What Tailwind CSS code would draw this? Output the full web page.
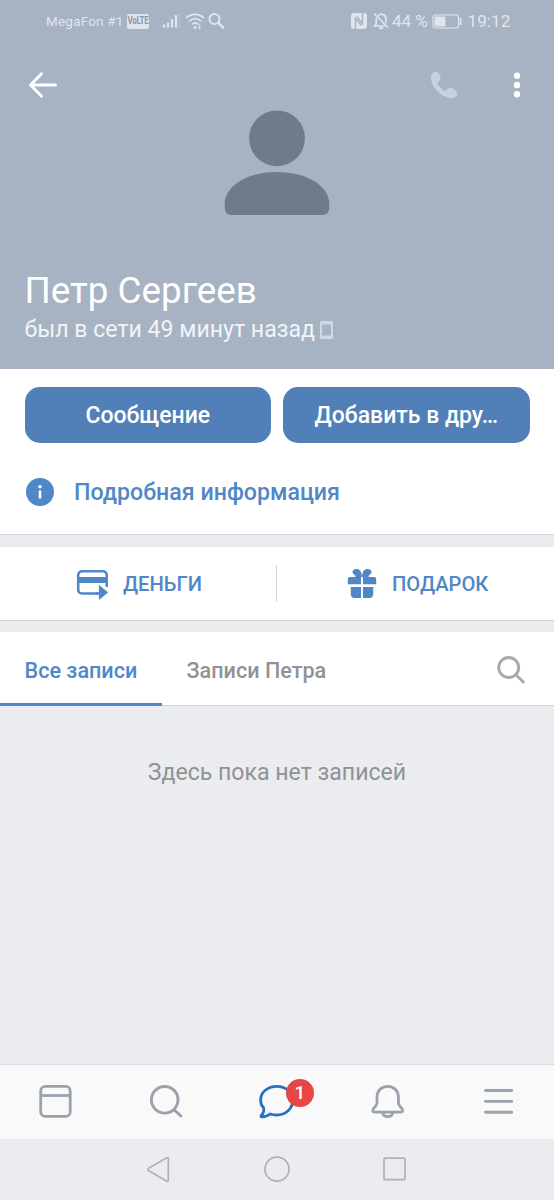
<!DOCTYPE html>
<html lang="ru">
<head>
<meta charset="utf-8">
<title>Петр Сергеев</title>
<script src="https://cdn.jsdelivr.net/npm/@tailwindcss/browser@4"></script>
</head>
<body class="flex h-[1200px] w-[554px] flex-col overflow-hidden bg-[#ebecf0] font-['Roboto','Noto_Sans',sans-serif]">

<header class="flex h-[369px] shrink-0 flex-col bg-[#a7b2c3] text-white">
  <!-- Status bar -->
  <div class="flex h-[42px] items-center pl-[46px] text-[#e0e5ed]">
    <span class="w-[81px] text-[13.5px] leading-[42px] tracking-[0.2px] whitespace-nowrap">MegaFon #1</span>
    <span class="flex h-[15px] w-[22px] items-center justify-center rounded-[2px] bg-[#dfe4ec] text-[8px] font-bold tracking-[-0.3px] text-[#8c98ab]"><span class="scale-y-125">VoLTE</span></span>
    <svg class="ml-[13px] h-[18px] w-[18px]" viewBox="0 0 18 18" fill="none" stroke="currentColor" stroke-width="2.300"><path d="M2 15.500v-3M6 15.500v-5M10 15.500V7M14 15.500V3"/><path d="M17.5 16V1" stroke-width="1" opacity=".3"/></svg>
    <svg class="ml-[5px] h-[18px] w-[20px]" viewBox="0 0 20 18" fill="none" stroke="currentColor" stroke-width="1.8"><path d="M1 6.2C6 1 14 1 19 6.2M4 9.4c3.500-3.600 8.500-3.600 12 0M7 12.400c2-1.800 4-1.800 6 0"/><path d="M10 13.400l1.800 2-1.800 2-1.800-2zM13 14.500l1.500-2.500 1.500 2.500zM13 15.200h3l-1.500 2.500z" fill="currentColor" stroke="none"/></svg>
    <svg class="ml-[3px] h-[18px] w-[18px]" viewBox="0 0 18 18" fill="none" stroke="currentColor" stroke-width="2.200" stroke-linecap="round"><circle cx="6.500" cy="7" r="5"/><path d="M10.500 11l4.700 4.700" stroke-width="2.500"/></svg>
    <svg class="ml-[125px] h-[16px] w-[17px]" viewBox="0 0 17 16"><rect width="16" height="16" rx="3" fill="currentColor"/><path d="M4.500 16V5.500l6 7M11.500 0v10.500l-6-7" stroke="#a7b2c3" stroke-width="1.400" fill="none"/></svg>
    <svg class="ml-[5px] h-[18px] w-[16px]" viewBox="0 0 16 18" fill="none" stroke="currentColor" stroke-width="1.700"><path d="M1 1.500l14 14M5 3.500C9 .5 13 3 13 7v4M3.200 6v6L1.500 14H12"/><path d="M6 16.200h4" stroke-width="2"/></svg>
    <span class="ml-[3px] w-[40px] text-[17px] leading-[42px] whitespace-nowrap">44 %</span>
    <svg class="h-[15px] w-[31px]" viewBox="0 0 31 15" fill="none" stroke="currentColor"><rect x="1" y="1" width="25.500" height="13" rx="2.500" stroke-width="1.100"/><path d="M3 3h10v9H3z" fill="currentColor"/><path d="M28.500 4v7" stroke-width="1.700"/></svg>
    <span class="ml-[4.500px] text-[17.200px] leading-[42px]">19:12</span>
  </div>

  <!-- Toolbar -->
  <nav class="mt-[17px] flex h-[51px] items-center pl-[28px]">
    <svg class="h-[28px] w-[30px]" viewBox="0 0 30 28" fill="none" stroke="#fff" stroke-width="3" stroke-linecap="round" stroke-linejoin="round"><path d="M27.500 14H2.500M13.500 2.800L2.500 14l11 11.200"/></svg>
    <svg class="ml-[372px] h-[28px] w-[28px]" viewBox="0 0 28 28" fill="#c9d1dc"><path d="M1 6C1 2.500 3 1 5.500 1 8.500 1 10.500 3.500 10.500 7c0 2.400-1.500 3.500-2.500 4.500-.7.800-.4 1.700.2 2.500 1.500 2.200 3.300 4 5.300 5.400.9.600 1.700.7 2.500-.1 1.300-1.300 2.400-2.300 4.500-2.300 3.300 0 6.500 2.500 6.500 5.500 0 3-2.500 4.500-6 4.500C13 27 1 17.500 1 6z"/></svg>
    <svg class="ml-[55px] h-[28px] w-[8px]" viewBox="0 0 8 28" fill="#fff"><circle cx="4" cy="4.700" r="3.200"/><circle cx="4" cy="14" r="3.200"/><circle cx="4" cy="23.300" r="3.200"/></svg>
  </nav>

  <svg class="ml-[224px] h-[106px] w-[106px]" viewBox="0 0 106 106" fill="#6f7b8b"><circle cx="53" cy="28.300" r="27.900"/><path d="M53 62c30 0 52.300 14 52.300 32v3c0 5-2.300 8-7 8H7.700c-4.700 0-7-3-7-8v-3C.7 76 23 62 53 62z"/></svg>

  <h1 class="mt-[53px] ml-[24.500px] h-[43px] text-[36.800px] leading-[43px] font-normal whitespace-nowrap">Петр Сергеев</h1>
  <div class="mt-[4px] ml-[24.500px] flex h-[28px] items-center text-[#f1f4f8]">
    <span class="w-[295.500px] text-[23.100px] leading-[28px] whitespace-nowrap">был в сети 49 минут назад</span>
    <svg class="h-[19px] w-[13px]" viewBox="0 0 13 19"><path fill-rule="evenodd" fill="#d1d8e2" d="M1.500 0h10a1.500 1.500 0 0 1 1.500 1.500v15a1.500 1.500 0 0 1-1.500 1.500h-10A1.500 1.500 0 0 1 0 16.500v-15A1.500 1.500 0 0 1 1.500 0zM2 3.500v11h9v-11z"/></svg>
  </div>
</header>

<section class="h-[166px] shrink-0 border-b border-[#d3d5d9] bg-white px-[24.500px] pt-[18px]">
  <div class="flex gap-[12px]">
    <button class="h-[56px] w-[246.500px] rounded-[15px] bg-[#5180b8] pt-[2px] text-[23px] font-medium text-white">Сообщение</button>
    <button class="h-[56px] w-[246.500px] rounded-[15px] bg-[#5180b8] pt-[2px] text-[23px] font-medium text-white">Добавить в дру…</button>
  </div>
  <div class="mt-[35px] flex h-[28px] items-center pl-[1.500px] text-[#4f87c7]">
    <svg class="h-[28px] w-[28px]" viewBox="0 0 28 28"><circle cx="14" cy="14" r="14" fill="currentColor"/><circle cx="14" cy="8.700" r="1.800" fill="#fff"/><path d="M14 12.500v8" stroke="#fff" stroke-width="2.600"/></svg>
    <span class="ml-[20px] text-[23.200px] leading-[28px] font-medium whitespace-nowrap">Подробная информация</span>
  </div>
</section>

<section class="mt-[12px] flex h-[74px] shrink-0 items-center border-b border-[#cfd1d6] bg-white text-[20px] font-medium text-[#4f87c7]">
  <div class="flex w-[276px] items-center pl-[76px]">
    <svg class="h-[32px] w-[32px]" viewBox="0 0 32 32"><path d="M22 25.500H6a3.800 3.800 0 0 1-3.800-3.800V7A3.800 3.800 0 0 1 6 3.200h21A3.800 3.800 0 0 1 30.800 7v12" fill="none" stroke="currentColor" stroke-width="2.600"/><path d="M2 9h29v6H2z" fill="currentColor"/><path d="M22.500 18.200c0-1 .8-1.400 1.600-.8l7.500 6.200c.6.500.6 1.200 0 1.700l-7.500 6.200c-.8.600-1.600.2-1.600-.8z" fill="currentColor" stroke="#fff" stroke-width=".8"/><path d="M20 24.200h5v2.600h-5z" fill="currentColor"/></svg>
    <span class="ml-[15px] text-[20.200px] leading-[28px] whitespace-nowrap">ДЕНЬГИ</span>
  </div>
  <div class="h-[37px] w-px bg-[#d0d2d6]"></div>
  <div class="flex items-center pl-[70px]">
    <svg class="h-[31px] w-[30px]" viewBox="0 0 30 31" fill="currentColor"><path d="M14 9H4C.5 9 .8 10.500.8 12v4.200H14zM16 9h10c3.500 0 3.200 1.500 3.200 3v4.200H16zM3.800 19H14v11H8.500c-3.500 0-4.700-1.300-4.700-4.500zM26.200 19H16v11h5.500c3.500 0 4.700-1.300 4.700-4.500z"/><path d="M15 8.500C14.500 3 12.500 1 9.700 1 7 1 5.500 2.300 5.500 4c0 1.500 1.500 2.200 3 4l-.5 2h5.500zM15 8.500C15.500 3 17.500 1 20.300 1c2.700 0 4.200 1.300 4.200 3 0 1.500-1.500 2.200-3 4l.5 2h-5.500z"/></svg>
    <span class="ml-[15px] text-[20.200px] leading-[28px] whitespace-nowrap">ПОДАРОК</span>
  </div>
</section>

<section class="mt-[11px] flex h-[74px] shrink-0 border-b border-[#cfd1d6] bg-white text-[21.600px] font-medium">
  <div class="-mb-px h-[74px] w-[162px] border-b-[3px] border-[#4f87c7] pl-[24.500px] leading-[78px] whitespace-nowrap text-[#4f87c7]">Все записи</div>
  <div class="w-[334px] pl-[24.500px] leading-[78px] whitespace-nowrap text-[#909295]">Записи Петра</div>
  <svg class="mt-[23px] h-[30px] w-[30px]" viewBox="0 0 30 30" fill="none" stroke="#a6a9ad" stroke-width="2.900" stroke-linecap="round"><circle cx="12.700" cy="12.500" r="10"/><path d="M20.300 20.200l7 6.800"/></svg>
</section>

<p class="mt-[53px] text-center text-[23.100px] leading-[28px] whitespace-nowrap text-[#909295]">Здесь пока нет записей</p>

<footer class="mt-auto shrink-0">
  <nav class="flex h-[75px] border-t border-[#dcdde1] bg-[#f9f9fa] text-[#99a2ad]">
    <svg class="mt-[18px] ml-[38px] h-[36px] w-[36px]" viewBox="0 0 36 36" fill="none" stroke="currentColor" stroke-width="2.800"><rect x="2.700" y="3.400" width="29.500" height="30" rx="4.500"/><path d="M3 12.500h29"/></svg>
    <svg class="mt-[18px] ml-[75px] h-[36px] w-[36px]" viewBox="0 0 36 36" fill="none" stroke="currentColor" stroke-width="2.900" stroke-linecap="round"><circle cx="15.700" cy="16.800" r="13.300"/><path d="M25.500 27l6.300 6"/></svg>
    <div class="relative mt-[18px] ml-[72px] h-[36px] w-[40px]">
      <svg class="h-[36px] w-[40px]" viewBox="0 0 40 36" fill="none" stroke="#2a70c0" stroke-width="2.800" stroke-linejoin="round"><path d="M19.700 3.300C10.700 3.300 3.600 9.300 3.600 17c0 3.300 1.100 5.800 3 7.700.7 3-.2 5.700-2.400 7.900-.5.600-.2 1.200.5 1.200 3.500.1 6-.7 8.500-2.800 2 .7 4 1 6.500 1 9 0 16.100-6.500 16.100-14.700 0-8-7.100-14-16.100-14z"/></svg>
      <span class="absolute -top-[4px] left-[29px] flex h-[28px] w-[28px] items-center justify-center rounded-full bg-[#e64646] pt-[1px] text-[19px] font-medium text-white">1</span>
    </div>
    <svg class="mt-[18px] ml-[73px] h-[36px] w-[36px]" viewBox="0 0 36 36" fill="none" stroke="currentColor" stroke-width="2.800" stroke-linejoin="round"><path d="M17.700 3.400c-6.600 0-10.700 4.800-10.700 11v5.300c0 1.800-.6 2.600-2 4.100-1.800 1.900-2.300 2.700-2.300 3.500 0 1.200.9 1.900 2.400 1.900h25.200c1.500 0 2.400-.7 2.400-1.900 0-.8-.5-1.600-2.300-3.500-1.400-1.500-2-2.300-2-4.100v-5.300c0-6.200-4.100-11-10.700-11z"/><path d="M12.500 29.500c.5 2.700 2.600 4.200 5.200 4.200s4.700-1.500 5.200-4.200"/></svg>
    <svg class="mt-[18px] ml-[75px] h-[36px] w-[36px]" viewBox="0 0 36 36" fill="none" stroke="currentColor" stroke-width="2.900" stroke-linecap="round"><path d="M4.500 7.500h26.200M4.500 18.400h26.200M4.500 29.300h26.200"/></svg>
  </nav>
  <div class="flex h-[61px] pt-[16px] text-[#b0b1b4]">
    <svg class="ml-[146px] h-[28px] w-[26px]" viewBox="0 0 26 28" fill="none" stroke="currentColor" stroke-width="1.700" stroke-linejoin="round"><path d="M2.600 13.200L20.800 2.700q1.500-.6 1.500 1v21.600q0 1.600-1.500 1L2.600 15.600q-1.400-1.200 0-2.400z"/></svg>
    <svg class="ml-[91px] h-[28px] w-[28px]" viewBox="0 0 28 28" fill="none" stroke="currentColor" stroke-width="1.700"><circle cx="14" cy="14.200" r="12"/></svg>
    <svg class="ml-[91px] h-[28px] w-[26px]" viewBox="0 0 26 28" fill="none" stroke="currentColor" stroke-width="1.700"><rect x="2" y="3.200" width="21" height="21.500" rx="1"/></svg>
  </div>
</footer>
</body>
</html>
